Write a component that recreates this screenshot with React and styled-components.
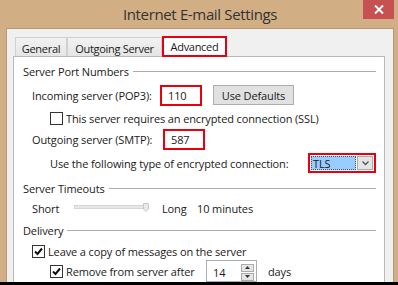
import styled, { createGlobalStyle } from "styled-components";

const Global = createGlobalStyle`
  html, body {
    margin: 0;
    padding: 0;
    background: #000;
  }
  body {
    font-family: "Open Sans", "Noto Sans", sans-serif;
  }
`;

const Window = styled.div`
  width: 398px;
  height: 285px;
  overflow: hidden;
  background: #d2ae84;
  display: flex;
  flex-direction: column;
  border-bottom: 3px solid #000;
  box-sizing: border-box;
`;

const TitleBar = styled.div`
  height: 28px;
  flex: none;
  position: relative;
  display: flex;
  align-items: center;
  justify-content: center;
`;

const Title = styled.div`
  font-size: 15px;
  letter-spacing: -0.35px;
  color: #333;
  margin-top: -1px;
  margin-left: 2px;
`;

const CloseButton = styled.div`
  position: absolute;
  top: 0;
  right: 4px;
  width: 31px;
  height: 19px;
  background: #c75050;
  display: flex;
  align-items: center;
  justify-content: center;
`;

const Body = styled.div`
  flex: 1;
  margin: 0 4px 0 6px;
  background: #f0f0f0;
  border: 1px solid #b89870;
  border-bottom: none;
  padding: 7px 8px 0 6px;
  display: flex;
  flex-direction: column;
  min-height: 0;
  font-size: 11px;
  letter-spacing: -0.12px;
  color: #1a1a1a;
`;

const Tabs = styled.div`
  display: flex;
  align-items: flex-end;
  height: 21px;
  padding-left: 2px;
  position: relative;
  z-index: 2;
`;

const Tab = styled.div`
  height: ${(p) => (p.$active ? "21px" : "19px")};
  box-sizing: border-box;
  display: flex;
  align-items: center;
  justify-content: center;
  white-space: nowrap;
  letter-spacing: -0.3px;
  background: ${(p) => (p.$active ? "#fff" : "linear-gradient(#f2f2f2, #e5e5e5)")};
  border: ${(p) => (p.$active ? "2px solid #e8000f" : "1px solid #d0d0d0")};
  border-bottom: ${(p) => (p.$active ? "2px solid #e8000f" : "none")};
  margin-bottom: ${(p) => (p.$active ? "-1px" : "0")};
  width: ${(p) => p.$w}px;
  padding-top: ${(p) => (p.$active ? "0" : "2px")};
`;

const Panel = styled.div`
  flex: 1;
  background: #fff;
  border: 1px solid #b9b9b9;
  border-bottom: none;
  padding: 6px 8px 0 9px;
  display: flex;
  flex-direction: column;
`;

const GroupHeader = styled.div`
  height: 16px;
  display: flex;
  align-items: center;
  gap: 4px;
  margin-top: ${(p) => p.$mt || 0}px;
  &::after {
    content: "";
    flex: 1;
    height: 1px;
    background: #acacac;
  }
`;

const Row = styled.div`
  height: ${(p) => p.$h || 16}px;
  display: flex;
  align-items: center;
  margin-top: ${(p) => p.$mt || 0}px;
  padding-left: ${(p) => p.$indent || 0}px;
`;

const Label = styled.span`
  width: ${(p) => (p.$w ? `${p.$w}px` : "auto")};
  margin-left: ${(p) => p.$ml || 0}px;
  flex: none;
  white-space: nowrap;
`;

const PortBox = styled.div`
  width: 42px;
  height: 21px;
  box-sizing: border-box;
  border: 2px solid #e8000f;
  padding-left: 6px;
  display: flex;
  align-items: center;
`;

const Button = styled.div`
  width: 81px;
  height: 20px;
  box-sizing: border-box;
  margin-left: 11px;
  background: #e1e1e1;
  border: 1px solid #adadad;
  display: flex;
  align-items: center;
  justify-content: center;
`;

const CheckBox = styled.div`
  width: 13px;
  height: 13px;
  box-sizing: border-box;
  border: 1px solid #333;
  background: #fff;
  flex: none;
  margin-right: 3px;
  display: flex;
  align-items: center;
  justify-content: center;
`;

const Combo = styled.div`
  width: 69px;
  height: 20px;
  box-sizing: border-box;
  border: 2px solid #e8000f;
  padding: 1px;
  display: flex;
`;

const ComboValue = styled.div`
  flex: 1;
  background: #99ccff;
  border: 1px dotted #555;
  display: flex;
  align-items: center;
  padding-left: 1px;
  line-height: 1;
`;

const ComboArrow = styled.div`
  width: 16px;
  background: #e5e5e5;
  border: 1px solid #acacac;
  box-sizing: border-box;
  display: flex;
  align-items: center;
  justify-content: center;
  margin-left: 1px;
`;

const Slider = styled.div`
  width: 76px;
  height: 10px;
  flex: none;
  display: flex;
  align-items: center;
`;

const SpinBox = styled.div`
  width: 51px;
  height: 22px;
  box-sizing: border-box;
  border: 1px solid #abadb3;
  margin-right: 11px;
  display: flex;
  align-items: center;
  padding: 2px 2px 0 6px;
`;

const SpinText = styled.span`
  flex: 1;
`;

const SpinButtons = styled.div`
  width: 13px;
  height: 17px;
  display: flex;
  flex-direction: column;
  gap: 1px;
`;

const SpinButton = styled.div`
  flex: 1;
  background: #e5e5e5;
  border: 1px solid #acacac;
  display: flex;
  align-items: center;
  justify-content: center;
`;

const Check = () => (
  <svg width="9" height="9" viewBox="0 0 9 9">
    <path d="M1 4.5 L3.5 7 L8 1.5" stroke="#111" strokeWidth="2" fill="none" />
  </svg>
);

export default function App() {
  return (
    <Window>
      <Global />
      <TitleBar>
        <Title>Internet E-mail Settings</Title>
        <CloseButton>
          <svg width="10" height="9" viewBox="0 0 10 9">
            <path d="M1 0.5 L9 8.5 M9 0.5 L1 8.5" stroke="#fff" strokeWidth="2" />
          </svg>
        </CloseButton>
      </TitleBar>
      <Body>
        <Tabs>
          <Tab $w={52}>General</Tab>
          <Tab $w={95}>Outgoing Server</Tab>
          <Tab $w={65} $active>
            Advanced
          </Tab>
        </Tabs>
        <Panel>
          <GroupHeader>Server Port Numbers</GroupHeader>
          <Row $h={22} $mt={5} $indent={9}>
            <Label $w={128}>Incoming server (POP3):</Label>
            <PortBox>110</PortBox>
            <Button>Use Defaults</Button>
          </Row>
          <Row $mt={4} $indent={27}>
            <CheckBox />
            <Label>This server requires an encrypted connection (SSL)</Label>
          </Row>
          <Row $h={22} $mt={2} $indent={9}>
            <Label $w={131}>Outgoing server (SMTP):</Label>
            <PortBox>587</PortBox>
          </Row>
          <Row $h={22} $mt={2} $indent={27}>
            <Label $w={258}>Use the following type of encrypted connection:</Label>
            <Combo>
              <ComboValue>TLS</ComboValue>
              <ComboArrow>
                <svg width="7" height="5" viewBox="0 0 7 5">
                  <path d="M0.5 0.5 L3.5 3.5 L6.5 0.5" stroke="#555" strokeWidth="1.3" fill="none" />
                </svg>
              </ComboArrow>
            </Combo>
          </Row>
          <GroupHeader $mt={6}>Server Timeouts</GroupHeader>
          <Row $mt={4} $indent={9}>
            <Label $w={42}>Short</Label>
            <Slider>
              <svg width="76" height="10" viewBox="0 0 76 10">
                <rect x="0.5" y="2.5" width="74" height="3" fill="#e7e7e7" stroke="#d6d6d6" />
                <path d="M69.5 0.5 H74.5 V6 L72 8.5 L69.5 6 Z" fill="#e9e9e9" stroke="#c8c8c8" />
              </svg>
            </Slider>
            <Label $ml={12} $w={35}>Long</Label>
            <Label>10 minutes</Label>
          </Row>
          <GroupHeader $mt={6}>Delivery</GroupHeader>
          <Row $mt={5} $indent={9}>
            <CheckBox>
              <Check />
            </CheckBox>
            <Label>Leave a copy of messages on the server</Label>
          </Row>
          <Row $h={22} $mt={1} $indent={27}>
            <CheckBox>
              <Check />
            </CheckBox>
            <Label $w={140}>Remove from server after</Label>
            <SpinBox>
              <SpinText>14</SpinText>
              <SpinButtons>
                <SpinButton>
                  <svg width="5" height="3" viewBox="0 0 5 3">
                    <path d="M0 3 L2.5 0 L5 3 Z" fill="#333" />
                  </svg>
                </SpinButton>
                <SpinButton>
                  <svg width="5" height="3" viewBox="0 0 5 3">
                    <path d="M0 0 L2.5 3 L5 0 Z" fill="#333" />
                  </svg>
                </SpinButton>
              </SpinButtons>
            </SpinBox>
            <Label>days</Label>
          </Row>
        </Panel>
      </Body>
    </Window>
  );
}
